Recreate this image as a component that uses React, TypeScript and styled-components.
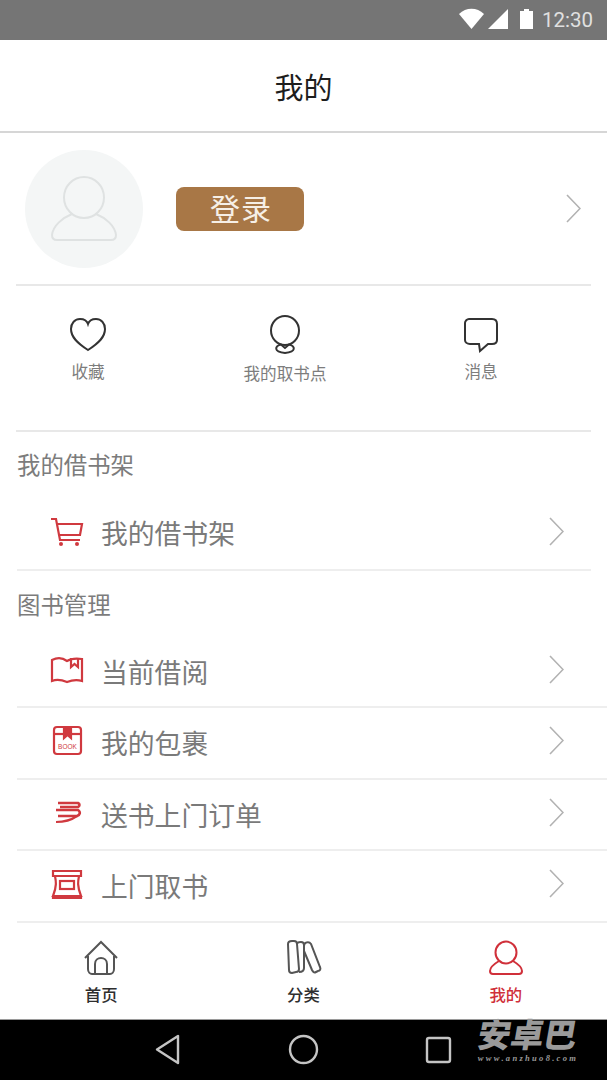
import React from "react";
import styled, { createGlobalStyle } from "styled-components";

const Global = createGlobalStyle`
  html, body { margin: 0; padding: 0; background: #fff; }
  body { font-family: "Noto Sans CJK SC", "Liberation Sans", sans-serif; }
  * { box-sizing: border-box; }
`;

const Page = styled.div`
  position: relative;
  width: 607px;
  height: 1080px;
  display: flex;
  flex-direction: column;
  overflow: hidden;
  background: #fff;
`;

const StatusBar = styled.div`
  height: 40px;
  background: #757575;
  display: flex;
  align-items: center;
  justify-content: flex-end;
  padding-right: 14px;
  flex: none;
`;
const StatusIcons = styled.svg`
  width: 84px;
  height: 24px;
  margin-right: 2px;
`;
const Clock = styled.span`
  font-family: "Roboto", "Liberation Sans", sans-serif;
  font-size: 20.5px;
  color: #e0e0e0;
  line-height: 24px;
`;

const Header = styled.header`
  height: 93px;
  flex: none;
  display: flex;
  align-items: center;
  justify-content: center;
  border-bottom: 2px solid #d6d6d6;
`;
const Title = styled.h1`
  margin: 0;
  font-size: 29px;
  font-weight: 400;
  line-height: 40px;
  color: #1d1d1d;
`;

const Profile = styled.section`
  height: 153px;
  flex: none;
  margin: 0 16px;
  padding: 0 10px 0 9px;
  display: flex;
  align-items: center;
  border-bottom: 2px solid #e8e8e8;
`;
const Avatar = styled.div`
  width: 118px;
  height: 118px;
  border-radius: 50%;
  background: #f4f6f6;
  display: flex;
  align-items: center;
  justify-content: center;
  flex: none;
`;
const LoginButton = styled.button`
  width: 128px;
  height: 44px;
  margin-left: 33px;
  padding: 0 0 3px 2px;
  border: 0;
  border-radius: 8px;
  background: #a87746;
  color: #f6efe6;
  font-family: inherit;
  font-size: 30px;
  letter-spacing: 1px;
  line-height: 41px;
`;
const Spacer = styled.div`
  flex: 1;
`;

const Shortcuts = styled.section`
  height: 146px;
  flex: none;
  margin: 0 16px;
  padding-top: 28px;
  border-bottom: 2px solid #e8e8e8;
  display: grid;
  grid-template-columns: 144px 250px 142px;
  align-items: start;
`;
const Shortcut = styled.div`
  display: flex;
  flex-direction: column;
  align-items: center;
`;
const ShortcutIcon = styled.svg`
  width: 44px;
  height: 44px;
  display: block;
`;
const ShortcutLabel = styled.span<{ $drop?: number }>`
  margin-top: ${(p) => p.$drop ?? 1}px;
  font-size: 16.6px;
  line-height: 24px;
  color: #7d7d7d;
`;

const SectionTitle = styled.h2<{ $h: number; $pb: number }>`
  margin: 0;
  height: ${(p) => p.$h}px;
  padding: 0 0 ${(p) => p.$pb}px 17px;
  display: flex;
  align-items: center;
  font-size: 23.4px;
  font-weight: 400;
  color: #7c7c7c;
  flex: none;
`;

const Row = styled.div<{ $h: number; $pb: number; $inset?: boolean }>`
  height: ${(p) => p.$h}px;
  flex: none;
  margin: 0 ${(p) => (p.$inset ? 16 : 0)}px 0 17px;
  padding: 0 ${(p) => (p.$inset ? 27 : 43)}px ${(p) => p.$pb}px 33px;
  display: flex;
  align-items: center;
  border-bottom: 2px solid #eeeeee;
`;
const RowIcon = styled.svg`
  width: 34px;
  height: 34px;
  flex: none;
`;
const RowLabel = styled.span`
  margin-left: 17px;
  padding-top: 4px;
  font-size: 26.8px;
  line-height: 36px;
  color: #7a7a7a;
`;

const TabBar = styled.nav`
  flex: 1;
  display: grid;
  grid-template-columns: repeat(3, 1fr);
  align-items: start;
  padding-top: 17px;
`;
const Tab = styled.div`
  display: flex;
  flex-direction: column;
  align-items: center;
`;
const TabIcon = styled.svg`
  width: 38px;
  height: 38px;
  display: block;
`;
const TabLabel = styled.span<{ $active?: boolean }>`
  font-size: 16.4px;
  line-height: 24px;
  margin-top: 4px;
  font-weight: 500;
  color: ${(p) => (p.$active ? "#d0303a" : "#2e2e2e")};
`;

const NavBar = styled.div`
  height: 61px;
  flex: none;
  background: #000;
  border-top: 1px solid #9a9a9a;
  display: flex;
  align-items: flex-start;
  justify-content: center;
`;
const NavIcons = styled.svg`
  width: 607px;
  height: 60px;
`;

const Watermark = styled.div`
  position: absolute;
  right: 28px;
  top: 1015px;
  width: 102px;
  color: #9a9a9a;
  text-align: center;
  pointer-events: none;
`;
const WatermarkMain = styled.div`
  font-size: 33px;
  line-height: 36px;
  font-weight: 900;
  white-space: nowrap;
  transform: skewX(-10deg);
`;
const WatermarkSub = styled.div`
  font-family: "Liberation Serif", serif;
  font-size: 8.5px;
  font-style: italic;
  font-weight: 700;
  letter-spacing: 2.3px;
  line-height: 10px;
  margin-top: 2px;
  white-space: nowrap;
`;

const Chevron = () => (
  <svg width={15} height={29} viewBox="0 0 15 29" style={{ flex: "none" }}>
    <path d="M1 1 L14 14.5 L1 28" fill="none" stroke="#b2b2b2" strokeWidth="1.6" />
  </svg>
);

const red = "#d0393f";

export default function App() {
  return (
    <Page>
      <Global />
      <StatusBar>
        <StatusIcons viewBox="0 0 84 24">
          <path d="M3 6 C10 -1 21 -1 28 6 L15.5 21 Z" fill="#fff" />
          <path d="M32 21 L52 1 V21 Z" fill="#fff" />
          <path d="M64 3 H68 V1 H73 V3 H77 V21 H64 Z" fill="#fff" />
        </StatusIcons>
        <Clock>12:30</Clock>
      </StatusBar>

      <Header>
        <Title>我的</Title>
      </Header>

      <Profile>
        <Avatar>
          <svg width="66" height="66" viewBox="0 0 66 66" fill="none" stroke="#dfe2e2" strokeWidth="2">
            <ellipse cx="33" cy="21.5" rx="20" ry="20.5" />
            <path d="M21 38 C11 42 2 50 1 59 C1 63 3 64 6 64 H60 C63 64 65 63 65 59 C64 50 55 42 45 38" />
          </svg>
        </Avatar>
        <LoginButton>登录</LoginButton>
        <Spacer />
        <Chevron />
      </Profile>

      <Shortcuts>
        <Shortcut>
          <ShortcutIcon viewBox="0 0 44 44" fill="none" stroke="#333" strokeWidth="2">
            <path d="M22 36 C11 29 5 23 5 15 C5 9 9 5 14 5 C18 5 21 7 22 10 C23 7 26 5 30 5 C35 5 39 9 39 15 C39 23 33 29 22 36 Z" />
          </ShortcutIcon>
          <ShortcutLabel>收藏</ShortcutLabel>
        </Shortcut>
        <Shortcut>
          <ShortcutIcon viewBox="0 0 44 44" fill="none" stroke="#333" strokeWidth="2">
            <ellipse cx="22" cy="16.5" rx="14" ry="14.5" />
            <path d="M22 34 L18 30.5 C12 32 10 38 22 39 C34 38 32 32 26 30.5 Z" />
          </ShortcutIcon>
          <ShortcutLabel $drop={3}>我的取书点</ShortcutLabel>
        </Shortcut>
        <Shortcut>
          <ShortcutIcon viewBox="0 0 44 44" fill="none" stroke="#333" strokeWidth="2">
            <path d="M10 5 H33 C36 5 38 7 38 10 V26 C38 29 36 30 33 30 H29 L21 37 L20 30 H11 C8 30 6 28 6 26 V9 C6 7 8 5 10 5 Z" />
          </ShortcutIcon>
          <ShortcutLabel>消息</ShortcutLabel>
        </Shortcut>
      </Shortcuts>

      <SectionTitle $h={66} $pb={2}>我的借书架</SectionTitle>
      <Row $h={73} $pb={5} $inset>
        <RowIcon viewBox="0 0 34 34" fill="none" stroke={red} strokeWidth="2.2">
          <path d="M1 5 H6 L10 26 H30" />
          <path d="M7 10 H32 L30 21 H9" />
          <circle cx="11" cy="30" r="2" fill={red} stroke="none" />
          <circle cx="27" cy="30" r="2" fill={red} stroke="none" />
        </RowIcon>
        <RowLabel>我的借书架</RowLabel>
        <Spacer />
        <Chevron />
      </Row>

      <SectionTitle $h={70} $pb={4}>图书管理</SectionTitle>
      <Row $h={67} $pb={8}>
        <RowIcon viewBox="0 0 34 34" fill="none" stroke={red} strokeWidth="2.2">
          <path d="M2 7 C8 4 13 5 17 8 C20 6 24 5 32 6 V28 C26 26 22 27 17 29 C12 27 7 26 2 28 Z" />
          <path d="M21 5 V14 L24.5 11 L28 14 V5" />
        </RowIcon>
        <RowLabel>当前借阅</RowLabel>
        <Spacer />
        <Chevron />
      </Row>
      <Row $h={72} $pb={5}>
        <RowIcon viewBox="0 0 34 34" fill="none" stroke={red} strokeWidth="2.2">
          <rect x="4" y="3" width="27" height="27" rx="3" />
          <path d="M4 10 H31" />
          <path d="M14 3 V14 L17.5 11 L21 14 V3" fill={red} />
          <text x="17.5" y="25" textAnchor="middle" fontSize="6.5" fontFamily="Liberation Sans" fill={red} stroke="none">BOOK</text>
        </RowIcon>
        <RowLabel>我的包裹</RowLabel>
        <Spacer />
        <Chevron />
      </Row>
      <Row $h={71} $pb={4}>
        <RowIcon viewBox="0 0 34 34" fill="none" stroke={red} strokeWidth="2.2">
          <path d="M8 7 H28 C30 8 30 10 28 11 H10" strokeWidth="2.6" />
          <path d="M6 14 H28 C31 16 30 19 27 20 H8" strokeWidth="2.6" />
          <path d="M6 26 C13 26 20 25 27 20" />
        </RowIcon>
        <RowLabel>送书上门订单</RowLabel>
        <Spacer />
        <Chevron />
      </Row>
      <Row $h={72} $pb={5}>
        <RowIcon viewBox="0 0 34 34" fill="none" stroke={red} strokeWidth="2.2">
          <path d="M3 4 H31 V9 H3 Z" />
          <path d="M5 9 C6 14 7 19 3 29 H31 C27 19 28 14 29 9" />
          <rect x="10" y="14" width="14" height="8" />
          <path d="M3 29 V31 H31 V29" />
        </RowIcon>
        <RowLabel>上门取书</RowLabel>
        <Spacer />
        <Chevron />
      </Row>

      <TabBar>
        <Tab>
          <TabIcon viewBox="0 0 38 38" fill="none" stroke="#555" strokeWidth="2">
            <path d="M3 18 L19 2 L35 18 M6 16 V29 C6 32 8 34 10 34 H28 C30 34 32 32 32 29 V16" />
            <path d="M13 34 V24 C13 16 25 16 25 24 V34" />
          </TabIcon>
          <TabLabel>首页</TabLabel>
        </Tab>
        <Tab>
          <TabIcon viewBox="0 0 38 38" fill="none" stroke="#555" strokeWidth="2">
            <path d="M4 4 C4 2 6 1 8 1 H10 C12 1 13 2 13 4 L15 29 C15 31 14 32 12 32 L8 33 C6 33 5 32 5 30 Z" />
            <path d="M13 4 C13 2 15 2 17 2 C19 2 20 3 20 5 L20 28 C20 31 18 32 15 32" />
            <path d="M20 6 C20 2 25 1 27 4 L36 27 C37 29 36 31 34 31 L32 32 C30 33 29 32 28 30 L20 11" />
          </TabIcon>
          <TabLabel>分类</TabLabel>
        </Tab>
        <Tab>
          <TabIcon viewBox="0 0 38 38" fill="none" stroke="#d0303a" strokeWidth="2">
            <ellipse cx="19" cy="12.5" rx="10.5" ry="11" />
            <path d="M12 21 C7 24 3 28 3 31 C3 33 4 34 6 34 H32 C34 34 35 33 35 31 C35 28 31 24 26 21" />
          </TabIcon>
          <TabLabel $active>我的</TabLabel>
        </Tab>
      </TabBar>

      <NavBar>
        <NavIcons viewBox="0 0 607 60" fill="none" stroke="#c4c4c4" strokeWidth="2.4">
          <path d="M178 16 V43 L157 29.5 Z" strokeLinejoin="round" />
          <circle cx="303.5" cy="29.5" r="13.5" />
          <rect x="427" y="18" width="23" height="24" rx="2" />
        </NavIcons>
      </NavBar>

      <Watermark>
        <WatermarkMain>安卓巴</WatermarkMain>
        <WatermarkSub>www.anzhuo8.com</WatermarkSub>
      </Watermark>
    </Page>
  );
}
